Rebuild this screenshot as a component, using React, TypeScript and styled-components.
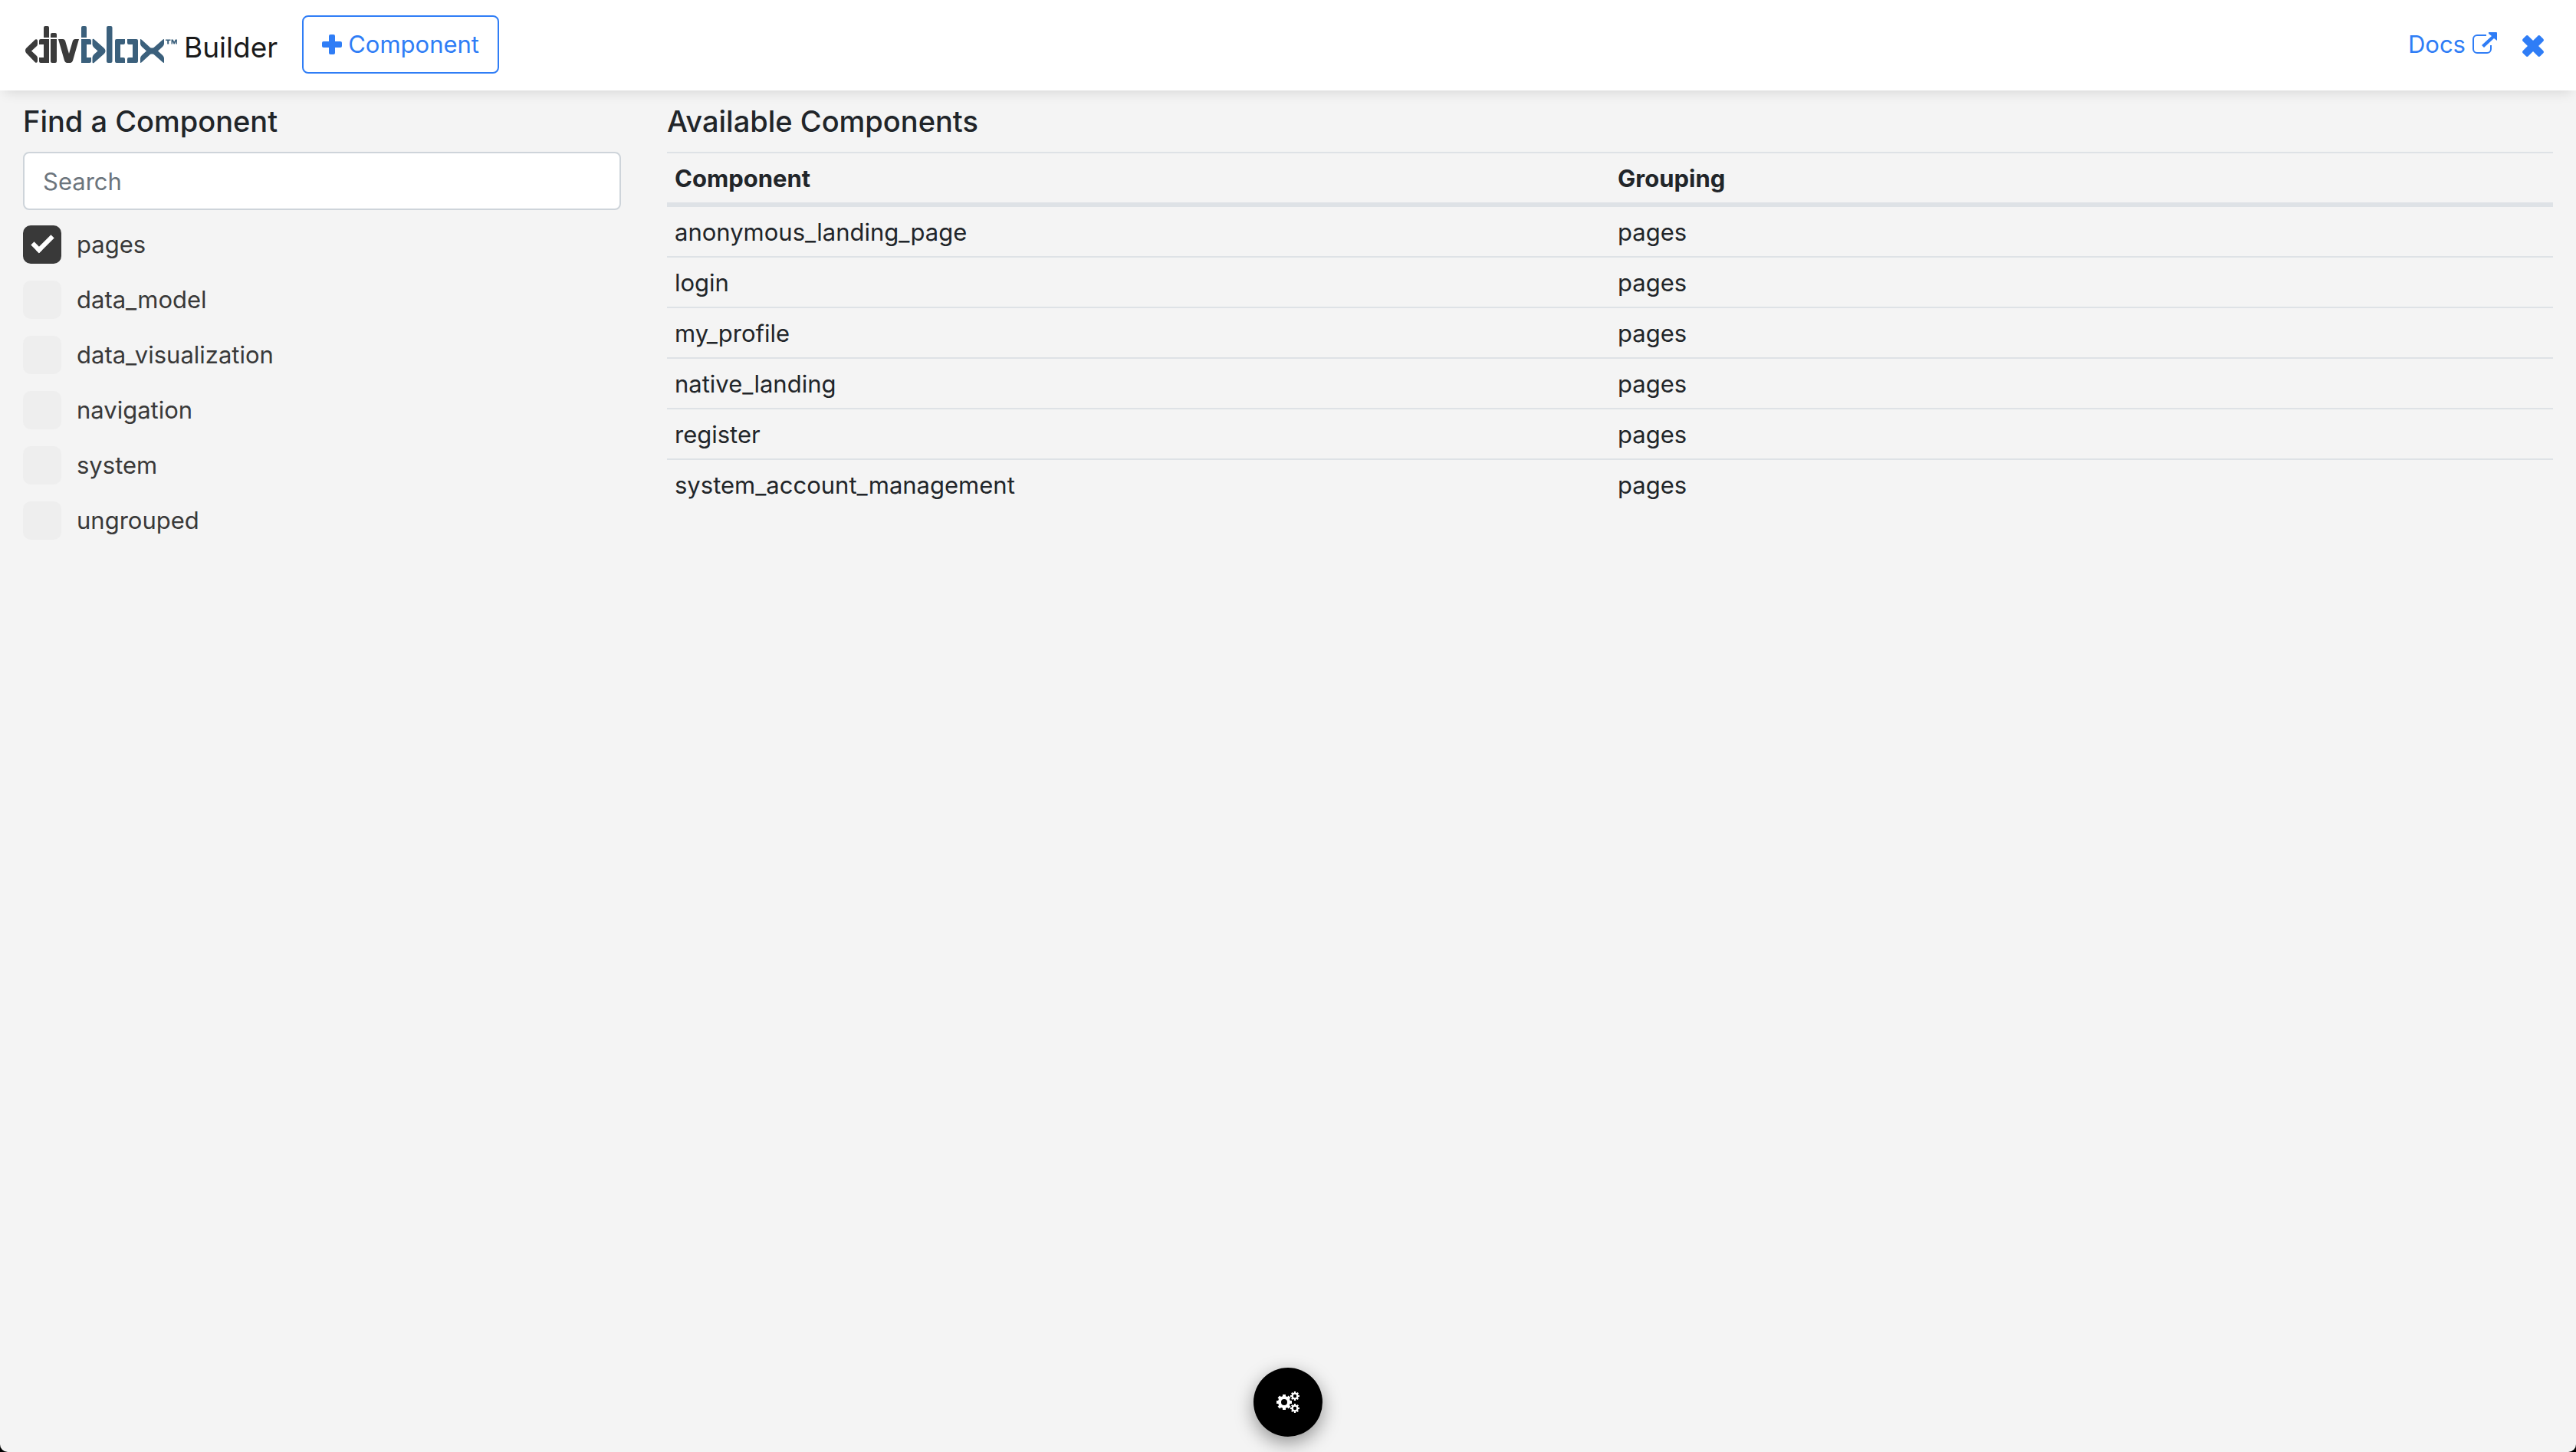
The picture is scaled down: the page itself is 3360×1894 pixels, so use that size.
import React, { useState } from "react";
import styled, { createGlobalStyle } from "styled-components";

const GlobalStyle = createGlobalStyle`
  *, *::before, *::after { box-sizing: border-box; }
  html { background: #000; }
  body { margin: 0; }
  body, button, input {
    font-family: Inter, "Liberation Sans", sans-serif;
    font-size: 31px;
    line-height: 48px;
  }
`;

const Page = styled.div`
  min-height: 100vh;
  background: #f4f4f4;
  color: #212529;
  border-radius: 0 0 10px 10px;
`;

const TopBar = styled.header`
  display: flex;
  align-items: center;
  justify-content: space-between;
  height: 118px;
  padding: 0 42px 2px 32px;
  background: #fff;
  box-shadow: 0 8px 16px -6px rgba(0, 0, 0, 0.13);
`;

const BarGroup = styled.div`
  display: flex;
  align-items: center;
  gap: 32px;
`;

const Brand = styled.a`
  display: flex;
  align-items: center;
  gap: 8px;
  color: #1a1a1a;
  text-decoration: none;
  font-size: 37px;
`;

const BrandText = styled.span`
  padding-top: 8px;
`;

const Wordmark = styled.svg`
  width: 200px;
  height: 52px;
`;

const AddButton = styled.button`
  display: flex;
  align-items: center;
  gap: 8px;
  height: 76px;
  padding: 12px 24px;
  border: 2px solid #2f7df6;
  border-radius: 8px;
  background: transparent;
  color: #2f7df6;
`;

const BarLink = styled.a`
  display: flex;
  align-items: center;
  gap: 8px;
  color: #2f7df6;
  text-decoration: none;
  svg { margin-bottom: 4px; }
`;

const CloseButton = styled.button`
  display: flex;
  padding: 4px 0 0;
  border: 0;
  background: none;
  color: #2f7df6;
`;

const Columns = styled.main`
  display: grid;
  grid-template-columns: 1fr 3fr;
  padding-top: 16px;
`;

const Column = styled.section`
  padding: 0 30px;
`;

const Heading = styled.h5`
  margin: 0 0 16px;
  font-size: 38px;
  font-weight: 500;
  line-height: 48px;
`;

const SearchBox = styled.input`
  display: block;
  width: 100%;
  height: 76px;
  padding: 12px 24px;
  border: 2px solid #ced4da;
  border-radius: 8px;
  background: #fff;
  &::placeholder { color: #6c757d; opacity: 1; }
`;

const FilterList = styled.ul`
  display: grid;
  gap: 22px;
  margin: 20px 0 0;
  padding: 0;
  list-style: none;
`;

const FilterLabel = styled.label`
  display: flex;
  align-items: center;
  gap: 20px;
  height: 50px;
  color: #393939;
`;

const Tick = styled.input`
  appearance: none;
  display: grid;
  place-items: center;
  width: 50px;
  height: 50px;
  margin: 0;
  border-radius: 10px;
  background: #eee;
  &:checked { background: #393939; }
  &:checked::before {
    content: "";
    width: 15px;
    height: 28px;
    margin-bottom: 8px;
    border: solid #fff;
    border-width: 0 6px 6px 0;
    transform: rotate(45deg);
  }
`;

const Table = styled.table`
  width: 100%;
  table-layout: fixed;
  border-spacing: 0;
`;

const HeadCell = styled.th`
  padding: 10px 10px 8px;
  border-top: 2px solid #dee2e6;
  border-bottom: 4px solid #dee2e6;
  font-weight: 700;
  line-height: 46px;
  text-align: left;
`;

const Cell = styled.td`
  padding: 10px 10px 8px;
  border-top: 2px solid #dee2e6;
  line-height: 46px;
`;

const SettingsButton = styled.button`
  position: fixed;
  bottom: 20px;
  left: 50%;
  display: grid;
  place-items: center;
  width: 90px;
  height: 90px;
  padding: 0;
  border: 0;
  border-radius: 50%;
  transform: translateX(-50%);
  background: #000;
  color: #fff;
  box-shadow: 0 8px 24px rgba(0, 0, 0, 0.4);
`;

const groups = ["pages", "data_model", "data_visualization", "navigation", "system", "ungrouped"];
const components = [
  "anonymous_landing_page",
  "login",
  "my_profile",
  "native_landing",
  "register",
  "system_account_management",
];

function Logo() {
  return (
    <Wordmark viewBox="32 32 200 52" role="img" aria-label="divblox">
      <g fill="#3b3b3b">
        <path d="M46 51.500q3-1 3 2v4q0 2-2 3.500l-6 5.500 6 5.500q2 1.500 2 3.500v4q0 3-3 2L34 69q-2-3 0-6Z" />
        <path d="M57 36q0-2 2-2h3q2 0 2 2v13h-7ZM53 51h11v31H53q-2 0-2-2v-5h6V58h-6v-5q0-2 2-2ZM66 45q0-2 2-2h4q2 0 2 2v4h-8ZM66 51h8v29q0 2-2 2h-4q-2 0-2-2Z" />
        <path d="M76 51h6q2 0 3 2l5 17 5-17q1-2 3-2h5l-8 28q-1 3-3 3h-5q-2 0-3-3Z" />
      </g>
      <g fill="#3b607c">
        <path d="M106 36q0-2 2-2h3q2 0 2 2v13h-7ZM106 51h11q2 0 2 2v5h-6v17h6v5q0 2-2 2h-11Z" />
        <path d="M122.500 51q-2-1-2 1v6q0 2 2 4l5 4.500-5 4.500q-2 2-2 4v6q0 2 2 1l13.500-12q3-3.500 0-7Z" />
        <rect x="139" y="34" width="7.500" height="48" rx="2" />
        <path d="M152 51h11v5q0 2-2 2h-4v17h4q2 0 2 2v5h-11q-2 0-2-2V53q0-2 2-2ZM166 51h12q2 0 2 2v27q0 2-2 2h-12v-5q0-2 2-2h5V58h-5q-2 0-2-2Z" />
        <path d="M183 51q1 0 2 1l12 11q2 3.500 0 7l-12 11q-1 1-2 1v-6q0-2 2-4l6-5.500-6-5.500q-2-2-2-4Z" />
        <path d="M214 51q-1 0-2 1l-12.500 11q-3 3.500 0 7L212 81q1 1 2 1v-6q0-2-2-4l-6-5.500 6-5.500q2-2 2-4Z" />
        <rect x="196" y="62.500" width="5" height="8" />
        <path d="M216 51.500h6.500v1.500h-2.300v4.500h-2V53H216ZM223.500 51.500h2.200l1.500 3 1.500-3h2.200v6h-1.500v-3.500l-1.600 3.500h-1.200l-1.600-3.500v3.500h-1.500Z" />
      </g>
    </Wordmark>
  );
}

function PlusIcon() {
  return (
    <svg width="26" height="26" viewBox="0 0 26 26" fill="currentColor" aria-hidden="true">
      <rect x="9" y="0" width="8" height="26" rx="2" />
      <rect x="0" y="9" width="26" height="8" rx="2" />
    </svg>
  );
}

function CloseIcon() {
  return (
    <svg width="28" height="28" viewBox="0 0 28 28" fill="currentColor" aria-hidden="true">
      <g transform="rotate(45 14 14)">
        <rect x="9" y="-2" width="10" height="32" rx="2.5" />
        <rect x="-2" y="9" width="32" height="10" rx="2.5" />
      </g>
    </svg>
  );
}

function ExternalLinkIcon() {
  return (
    <svg width="34" height="28" viewBox="0 0 34 28" fill="none" aria-hidden="true">
      <path d="M19 4H7a5 5 0 0 0-5 5v13a5 5 0 0 0 5 5h13a5 5 0 0 0 5-5v-5" stroke="currentColor" strokeWidth="2" />
      <path d="M22 0h10q1 0 1 1v10l-4-3-13 12-3-3 13-12-4-3Z" fill="currentColor" />
    </svg>
  );
}

interface GearProps {
  cx: number;
  cy: number;
  outer: number;
  ring: number;
  width: number;
  tooth: number;
}

function Gear({ cx, cy, outer, ring, width, tooth }: GearProps) {
  return (
    <g transform={`translate(${cx} ${cy})`}>
      <circle r={ring} fill="none" stroke="currentColor" strokeWidth={width} />
      {[0, 45, 90, 135, 180, 225, 270, 315].map((angle) => (
        <rect
          key={angle}
          x={-tooth / 2}
          y={-outer}
          width={tooth}
          height={outer - ring}
          fill="currentColor"
          transform={`rotate(${angle})`}
        />
      ))}
    </g>
  );
}

function CogsIcon() {
  return (
    <svg width="30" height="28" viewBox="0 0 30 28" aria-hidden="true">
      <Gear cx={10} cy={14} outer={10} ring={6} width={4} tooth={4} />
      <Gear cx={24} cy={6} outer={6} ring={3.4} width={2.4} tooth={2.2} />
      <Gear cx={24} cy={22} outer={6} ring={3.4} width={2.4} tooth={2.2} />
    </svg>
  );
}

export default function App() {
  const [selected, setSelected] = useState<string[]>(["pages"]);
  const toggle = (name: string) =>
    setSelected((s) => (s.includes(name) ? s.filter((n) => n !== name) : [...s, name]));

  return (
    <Page>
      <GlobalStyle />
      <TopBar>
        <BarGroup>
          <Brand href="#">
            <Logo />
            <BrandText>Builder</BrandText>
          </Brand>
          <AddButton type="button">
            <PlusIcon />
            Component
          </AddButton>
        </BarGroup>
        <BarGroup>
          <BarLink href="#docs">
            Docs
            <ExternalLinkIcon />
          </BarLink>
          <CloseButton type="button" aria-label="Close">
            <CloseIcon />
          </CloseButton>
        </BarGroup>
      </TopBar>
      <Columns>
        <Column>
          <Heading>Find a Component</Heading>
          <SearchBox type="text" placeholder="Search" aria-label="Search" />
          <FilterList>
            {groups.map((name) => (
              <li key={name}>
                <FilterLabel>
                  <Tick type="checkbox" checked={selected.includes(name)} onChange={() => toggle(name)} />
                  {name}
                </FilterLabel>
              </li>
            ))}
          </FilterList>
        </Column>
        <Column>
          <Heading>Available Components</Heading>
          <Table>
            <thead>
              <tr>
                <HeadCell scope="col">Component</HeadCell>
                <HeadCell scope="col">Grouping</HeadCell>
              </tr>
            </thead>
            <tbody>
              {components.map((name) => (
                <tr key={name}>
                  <Cell>{name}</Cell>
                  <Cell>pages</Cell>
                </tr>
              ))}
            </tbody>
          </Table>
        </Column>
      </Columns>
      <SettingsButton type="button" aria-label="Settings">
        <CogsIcon />
      </SettingsButton>
    </Page>
  );
}
